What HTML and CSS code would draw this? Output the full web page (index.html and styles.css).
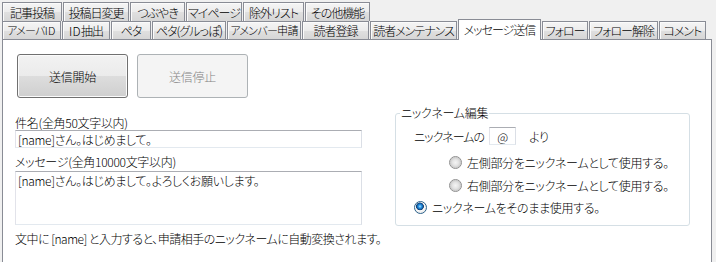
FILE: index.html
```html
<!DOCTYPE html>
<html lang="ja">
<head>
<meta charset="utf-8">
<title>メッセージ送信</title>
<link rel="stylesheet" href="styles.css">
</head>
<body>
<div class="tabs">
  <div class="tab-row row1">
    <div class="tab w60">記事投稿</div>
    <div class="tab w66">投稿日変更</div>
    <div class="tab w55">つぶやき</div>
    <div class="tab w56">マイページ</div>
    <div class="tab w61">除外リスト</div>
    <div class="tab w65">その他機能</div>
  </div>
  <div class="tab-row row2">
    <div class="tab w59 tight">アメーバ<span class="latin">ID</span></div>
    <div class="tab w48"><span class="latin">ID</span>抽出</div>
    <div class="tab w40">ペタ</div>
    <div class="tab w74">ペタ(グルっぽ)</div>
    <div class="tab w74 tight">アメンバー申請</div>
    <div class="tab w67">読者登録</div>
    <div class="tab w87">読者メンテナンス</div>
    <div class="tab w83 selected">メッセージ送信</div>
    <div class="tab w46">フォロー</div>
    <div class="tab w69">フォロー解除</div>
    <div class="tab w47">コメント</div>
  </div>
</div>
<div class="panel">
  <div class="buttons">
    <button class="btn">送信開始</button>
    <button class="btn" disabled>送信停止</button>
  </div>
  <div class="content">
    <div class="left">
      <label class="lbl">件名(全角50文字以内)</label>
      <input class="text subject" type="text" value="[name]さん。はじめまして。">
      <label class="lbl lbl2">メッセージ(全角10000文字以内)</label>
      <textarea class="text message">[name]さん。はじめまして。よろしくお願いします。</textarea>
      <p class="note">文中に [name] と入力すると、申請相手のニックネームに自動変換されます。</p>
    </div>
    <fieldset class="group">
      <legend>ニックネーム編集</legend>
      <div class="nick-row">
        <span class="nick-label">ニックネームの</span>
        <input class="text at" type="text" value="@">
        <span class="yori">より</span>
      </div>
      <label class="radio-row indent first"><input class="radio" type="radio" name="nick"><span>左側部分をニックネームとして使用する。</span></label>
      <label class="radio-row indent"><input class="radio" type="radio" name="nick"><span>右側部分をニックネームとして使用する。</span></label>
      <label class="radio-row"><input class="radio" type="radio" name="nick" checked><span>ニックネームをそのまま使用する。</span></label>
    </fieldset>
  </div>
</div>
</body>
</html>
```
FILE: styles.css
```css
html, body {
  margin: 0;
  padding: 0;
}
body {
  background: #f0f0f0;
  font-family: "Noto Sans CJK JP", "Noto Sans", sans-serif;
  font-size: 12px;
  font-weight: 300;
  line-height: 15px;
  font-feature-settings: "palt" 1;
  letter-spacing: -0.3px;
  color: #000;
  overflow: hidden;
  height: 262px;
  white-space: nowrap;
}
.tabs {
  padding: 2px 0 0 2px;
}
.tab-row {
  display: flex;
  gap: 1px;
  align-items: flex-end;
}
.row1 { height: 19px; }
.row2 { height: 18px; }
.tab {
  box-sizing: border-box;
  height: 100%;
  border: 1px solid #898c95;
  border-bottom: none;
  background: linear-gradient(#f5f5f5, #ececec 50%, #e0e0e0 51%, #d6d6d6);
  box-shadow: inset 1px 1px 0 #fbfbfb;
  display: flex;
  justify-content: center;
  align-items: center;
  letter-spacing: -1px;
  overflow: hidden;
}
.tab .latin {
  letter-spacing: 0.3px;
}
.tab.tight {
  font-size: 11px;
  letter-spacing: -0.7px;
}
.tab.selected {
  position: relative;
  z-index: 1;
  height: 21px;
  margin-bottom: -1px;
  padding-bottom: 2px;
  background: #fff;
  box-shadow: none;
}
.w40 { width: 40px; }
.w46 { width: 46px; }
.w47 { width: 47px; }
.w48 { width: 48px; }
.w55 { width: 55px; }
.w56 { width: 56px; }
.w59 { width: 59px; }
.w60 { width: 60px; }
.w61 { width: 61px; }
.w65 { width: 65px; }
.w66 { width: 66px; }
.w67 { width: 67px; }
.w69 { width: 69px; }
.w74 { width: 74px; }
.w83 { width: 83px; }
.w87 { width: 87px; }

.panel {
  box-sizing: border-box;
  margin: 0 4px 0 2px;
  height: 223px;
  border: 1px solid #898c95;
  border-bottom: none;
  background: #fff;
  padding: 14px 0 0 12px;
}
.buttons {
  display: flex;
  gap: 9px;
  margin-left: 2px;
}
.btn {
  box-sizing: border-box;
  width: 111px;
  height: 44px;
  margin: 0;
  padding: 0;
  border: 1px solid #707070;
  border-radius: 3px;
  background: linear-gradient(#f2f2f2, #ebebeb 50%, #dddddd 51%, #cfcfcf);
  box-shadow: inset 0 0 0 1px #fbfbfb;
  font: inherit;
  letter-spacing: inherit;
  color: #000;
}
.btn:disabled {
  border-color: #adb2b5;
  background: #f4f4f4;
  box-shadow: none;
  color: #838383;
}
.content {
  display: flex;
  align-items: flex-start;
  margin-top: 8px;
}
.left {
  width: 347px;
  padding-top: 9px;
  display: flex;
  flex-direction: column;
}
.lbl {
  display: block;
  height: 15px;
  line-height: 15px;
}
.lbl2 {
  margin-top: 6px;
}
.text {
  box-sizing: border-box;
  margin: 0;
  border: 1px solid;
  border-color: #abadb3 #dbdfe6 #e3e9ef #e2e3ea;
  background: #fff;
  font: inherit;
  letter-spacing: inherit;
  color: #000;
  outline: none;
}
.subject {
  width: 347px;
  height: 18px;
  padding: 0 2px;
  line-height: 16px;
}
.message {
  width: 347px;
  height: 54px;
  margin-top: 2px;
  padding: 1px 2px;
  resize: none;
  line-height: 15px;
  overflow: hidden;
}
.note {
  margin: 6px 0 0;
  line-height: 15px;
  letter-spacing: -0.5px;
}
.group {
  box-sizing: border-box;
  width: 295px;
  margin: 0 0 0 33px;
  padding: 0 0 7px;
  border: 1px solid #d5dfe5;
  border-radius: 3px;
}
.group legend {
  margin-left: 4px;
  padding: 0 1px;
  line-height: 14px;
}
.nick-row {
  display: flex;
  align-items: center;
  height: 18px;
  margin-top: 7px;
  padding-left: 18px;
}
.nick-label {
  letter-spacing: -1px;
  margin-right: 5px;
}
.at {
  width: 27px;
  height: 18px;
  padding: 0;
  text-align: center;
  line-height: 16px;
}
.yori {
  margin-left: 13px;
}
.radio-row {
  display: flex;
  align-items: center;
  gap: 5px;
  height: 22px;
  padding-left: 18px;
}
.radio-row.indent {
  padding-left: 53px;
}
.radio-row.first {
  margin-top: 6px;
  height: 23px;
}
.radio {
  appearance: none;
  -webkit-appearance: none;
  box-sizing: border-box;
  flex: none;
  width: 13px;
  height: 13px;
  margin: 0;
  border: 1px solid #8f8f8f;
  border-radius: 50%;
  background: radial-gradient(circle at 50% 50%, #f4f4f4 0, #e4e4e4 3px, #cfcfcf 5px, #f8f8f8 6px);
}
.radio:checked {
  border-color: #2c628b;
  background: radial-gradient(circle at 45% 40%, #b5e3ff 0, #2e9ae6 1.5px, #0b5aa8 3px, #1c3e66 3.6px, #ffffff 4.2px, #eeeeee 5.5px);
}
```
